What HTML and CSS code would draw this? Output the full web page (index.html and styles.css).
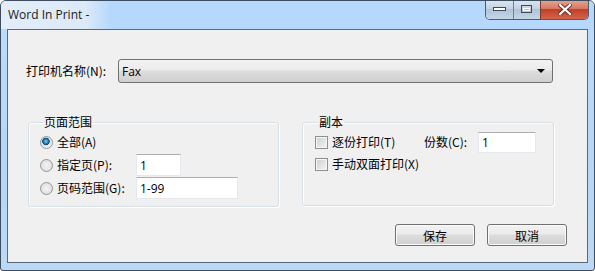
FILE: index.html
```html
<!DOCTYPE html>
<html>
<head>
    <meta charset="UTF-8">
    <title>Word In Print</title>
    <link rel="stylesheet" href="styles.css">
</head>
<body>
<div class="window">
    <div class="titlebar">
        <span class="title">Word In Print -</span>
        <div class="caption-buttons">
            <span class="cap cap-min">
                <svg width="14" height="5" viewBox="0 0 14 5"><rect x="0.5" y="0.5" width="12" height="3" fill="#fff" stroke="#3b4a5c"/></svg>
            </span>
            <span class="cap cap-max">
                <svg width="12" height="9" viewBox="0 0 12 9"><rect x="0.5" y="0.5" width="10" height="7" fill="none" stroke="#3b4a5c"/><rect x="2.5" y="3.5" width="6" height="2" fill="none" stroke="#fff"/></svg>
            </span>
            <span class="cap cap-close">
                <svg width="14" height="11" viewBox="0 0 14 11"><path d="M2 1 L12 10 M12 1 L2 10" stroke="#6b2a1e" stroke-width="4" stroke-linecap="square"/><path d="M2 1 L12 10 M12 1 L2 10" stroke="#fff" stroke-width="2.2" stroke-linecap="square"/></svg>
            </span>
        </div>
    </div>

    <div class="client">
        <div class="printer-row">
            <label class="lbl printer-lbl">打印机名称(N):</label>
            <div class="combo">
                <span class="combo-text">Fax</span>
                <span class="combo-arrow"></span>
            </div>
        </div>

        <div class="groups">
            <fieldset class="group group-range">
                <legend>页面范围</legend>
                <div class="opt">
                    <input type="radio" name="range" class="radio" checked>
                    <span class="lbl">全部(A)</span>
                </div>
                <div class="opt">
                    <input type="radio" name="range" class="radio">
                    <span class="lbl opt-lbl">指定页(P):</span>
                    <input type="text" class="field field-page" value="1">
                </div>
                <div class="opt">
                    <input type="radio" name="range" class="radio">
                    <span class="lbl opt-lbl">页码范围(G):</span>
                    <input type="text" class="field field-span" value="1-99">
                </div>
            </fieldset>

            <fieldset class="group group-copies">
                <legend>副本</legend>
                <div class="opt">
                    <input type="checkbox" class="check">
                    <span class="lbl collate-lbl">逐份打印(T)</span>
                    <span class="lbl count-lbl">份数(C):</span>
                    <input type="text" class="field field-count" value="1">
                </div>
                <div class="opt opt-tight">
                    <input type="checkbox" class="check">
                    <span class="lbl">手动双面打印(X)</span>
                </div>
            </fieldset>
        </div>

        <div class="actions">
            <button type="button" class="btn">保存</button>
            <button type="button" class="btn">取消</button>
        </div>
    </div>
</div>
</body>
</html>
```

FILE: styles.css
```css
body {
    margin: 0;
    background: #ffffff;
}
.window {
    width: 595px;
    height: 271px;
    box-sizing: border-box;
    display: flex;
    flex-direction: column;
    border: 1px solid #3d4c5e;
    border-radius: 6px 6px 3px 3px;
    background: linear-gradient(#bcdcfd, #b4d6f8 60%, #bcd9f4);
    overflow: hidden;
}

/* title bar */
.titlebar {
    height: 28px;
    display: flex;
    justify-content: space-between;
    align-items: flex-start;
    background: linear-gradient(90deg, #e4eefa 0, #dbe9f8 85px, #b6d8fc 110px, #b6d8fc 100%);
}
.title {
    font-family: "Open Sans", "DejaVu Sans", sans-serif;
    font-size: 12px;
    color: #1a1a1a;
    margin: 6px 0 0 7px;
    line-height: 16px;
}
.caption-buttons {
    display: flex;
    margin: -1px 5px 0 0;
    height: 19px;
    border: 1px solid #4c5c70;
    border-top: 0;
    border-radius: 0 0 5px 5px;
    overflow: hidden;
}
.cap {
    display: flex;
    align-items: center;
    justify-content: center;
    height: 19px;
}
.cap-min {
    width: 27px;
    border-right: 1px solid #6f8096;
    background: linear-gradient(#dbe6f2, #c3d2e3 45%, #b0c3d8 50%, #c7d6e6);
}
.cap-max {
    width: 26px;
    border-right: 1px solid #7a3a2e;
    background: linear-gradient(#dbe6f2, #c3d2e3 45%, #b0c3d8 50%, #c7d6e6);
}
.cap-close {
    width: 47px;
    background: linear-gradient(#e9a493, #d77a64 45%, #c43f26 50%, #d3644c);
}

/* client area */
.client {
    flex: 1;
    margin: 0 6px 7px 6px;
    border: 1px solid #5a6a7c;
    background: #f0f0f0;
    display: flex;
    flex-direction: column;
}
.lbl {
    font-family: "Noto Sans CJK SC", sans-serif;
    font-size: 12px;
    color: #000;
    line-height: 16px;
    white-space: nowrap;
}
.printer-row {
    display: flex;
    align-items: center;
    height: 24px;
    margin-top: 29px;
    padding-left: 18px;
}
.printer-lbl {
    width: 92px;
}
.combo {
    width: 435px;
    height: 24px;
    box-sizing: border-box;
    border: 1px solid #707070;
    border-radius: 3px;
    background: linear-gradient(#f2f2f2, #ebebeb 45%, #dddddd 50%, #cfcfcf);
    display: flex;
    align-items: center;
    justify-content: space-between;
    padding: 0 7px 0 3px;
}
.combo-text {
    font-family: "Open Sans", "DejaVu Sans", sans-serif;
    font-size: 12px;
    color: #000;
}
.combo-arrow {
    width: 0;
    height: 0;
    border-left: 4px solid transparent;
    border-right: 4px solid transparent;
    border-top: 4px solid #000;
}

/* group boxes */
.groups {
    display: flex;
    gap: 23px;
    margin: 32px 0 0 20px;
}
.group {
    margin: 0;
    padding: 2px 0 6px 11px;
    border: 1px solid #d5dfe5;
    border-radius: 3px;
    box-shadow: inset 1px 1px 0 #ffffff, 1px 1px 0 #ffffff;
    display: flex;
    flex-direction: column;
    gap: 1px;
}
.group legend {
    font-family: "Noto Sans CJK SC", sans-serif;
    font-size: 12px;
    line-height: 14px;
    padding: 0 1px;
    margin-left: 3px;
    color: #000;
}
.group-range {
    width: 251px;
    box-sizing: border-box;
    height: 92px;
}
.group-copies {
    width: 252px;
    box-sizing: border-box;
    height: 91px;
    padding-left: 12px;
}
.opt {
    display: flex;
    align-items: center;
    height: 22px;
}
.opt-tight {
    margin-top: -1px;
}
.radio {
    appearance: none;
    width: 13px;
    height: 13px;
    margin: 0 4px 0 0;
    border: 1px solid #959595;
    border-radius: 50%;
    box-sizing: border-box;
    background: radial-gradient(circle at 50% 50%, #f4f4f4, #d8d8d8);
}
.radio:checked {
    background: radial-gradient(circle at 45% 40%, #8ed0f0 0, #2a85b8 2px, #0f4b7a 3.5px, #dcdcdc 4px, #f4f4f4 6px);
}
.check {
    appearance: none;
    width: 13px;
    height: 13px;
    margin: 0 4px 0 0;
    border: 1px solid #8e8f8f;
    box-sizing: border-box;
    background: linear-gradient(135deg, #cfcfcf, #f4f4f4);
    box-shadow: inset 0 0 0 1px #f6f6f6;
}
.opt-lbl {
    width: 79px;
}
.collate-lbl {
    width: 92px;
}
.count-lbl {
    width: 54px;
}
.field {
    height: 22px;
    box-sizing: border-box;
    margin: 0;
    border: 1px solid #e3e9ef;
    border-top-color: #abadb3;
    background: #ffffff;
    font-family: "Open Sans", "DejaVu Sans", sans-serif;
    font-size: 12px;
    color: #000;
    padding: 0 3px;
    outline: none;
}
.field-page {
    width: 45px;
}
.field-span {
    width: 102px;
}
.field-count {
    width: 58px;
    height: 21px;
}

/* buttons */
.actions {
    display: flex;
    justify-content: flex-end;
    gap: 12px;
    margin-top: 17px;
    padding-right: 20px;
}
.btn {
    width: 80px;
    height: 22px;
    border: 1px solid #707070;
    border-radius: 3px;
    background: linear-gradient(#f2f2f2, #ebebeb 45%, #dddddd 50%, #cfcfcf);
    box-shadow: inset 0 0 0 1px #fbfbfb;
    font-family: "Noto Sans CJK SC", sans-serif;
    font-size: 12px;
    color: #000;
    padding: 0;
}
```
